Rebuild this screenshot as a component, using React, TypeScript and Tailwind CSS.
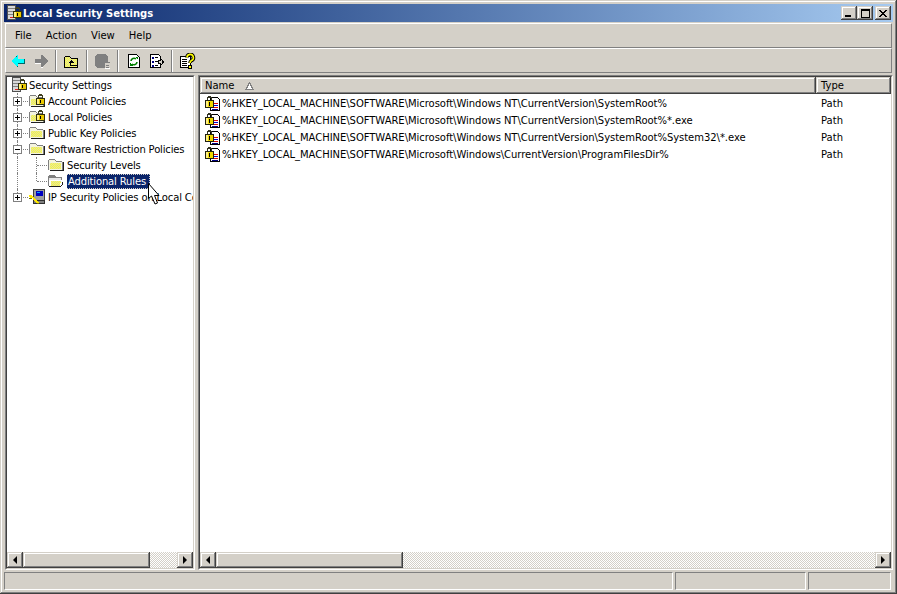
import type { ReactNode } from 'react';

const RAISED = 'shadow-[inset_-1px_-1px_#404040,inset_1px_1px_#d4d0c8,inset_-2px_-2px_#808080,inset_2px_2px_#ffffff]';
const SUNKEN = 'border border-t-[#808080] border-l-[#808080] border-r-white border-b-white';

const TREE = [
  { label: 'Account Policies', depth: 0, box: '+', icon: 'lock' },
  { label: 'Local Policies', depth: 0, box: '+', icon: 'lock' },
  { label: 'Public Key Policies', depth: 0, box: '+', icon: 'folder' },
  { label: 'Software Restriction Policies', depth: 0, box: '-', icon: 'folder' },
  { label: 'Security Levels', depth: 1, icon: 'folder' },
  { label: 'Additional Rules', depth: 1, icon: 'open', selected: true },
  { label: 'IP Security Policies on Local Computer', depth: 0, box: '+', icon: 'ip', last: true },
];

const RULES = [
  '%HKEY_LOCAL_MACHINE\\SOFTWARE\\Microsoft\\Windows NT\\CurrentVersion\\SystemRoot%',
  '%HKEY_LOCAL_MACHINE\\SOFTWARE\\Microsoft\\Windows NT\\CurrentVersion\\SystemRoot%*.exe',
  '%HKEY_LOCAL_MACHINE\\SOFTWARE\\Microsoft\\Windows NT\\CurrentVersion\\SystemRoot%System32\\*.exe',
  '%HKEY_LOCAL_MACHINE\\SOFTWARE\\Microsoft\\Windows\\CurrentVersion\\ProgramFilesDir%',
];

function Px({ children, w = 16, h = 16 }: { children: ReactNode; w?: number; h?: number }) {
  return (
    <svg width={w} height={h} viewBox={`0 0 ${w} ${h}`} shapeRendering="crispEdges" className="shrink-0">
      <defs>
        <pattern id="dither" width="2" height="2" patternUnits="userSpaceOnUse">
          <rect width="2" height="2" fill="#ffff33" />
          <rect width="1" height="1" fill="#dcdcb0" />
          <rect x="1" y="1" width="1" height="1" fill="#dcdcb0" />
        </pattern>
      </defs>
      {children}
    </svg>
  );
}

function Padlock({ x = 0, y = 0 }: { x?: number; y?: number }) {
  return (
    <g transform={`translate(${x} ${y})`}>
      <path d="M2 5V1h1V0h3v1h1v4H6V2H3v3z" fill="#404020" />
      <rect x="0" y="4" width="9" height="7" fill="#303010" />
      <rect x="1" y="5" width="7" height="5" fill="#e8c800" />
      <rect x="1" y="5" width="2" height="5" fill="#fff080" />
      <rect x="4" y="6" width="1" height="3" fill="#000" />
    </g>
  );
}

function FolderBody() {
  return (
    <>
      <path d="M0 3h1V2h6v1h1v1h6v1h1v8H0z" fill="#808080" />
      <path d="M1 4V3h6v1h1v1h6v8H1z" fill="#f4f4e0" />
      <path d="M2 6h11v6H2z" fill="url(#dither)" />
      <path d="M15 5h1v9H2v-1h13z" fill="#202020" />
    </>
  );
}

function TreeIcon({ kind }: { kind: string }) {
  if (kind === 'folder')
    return (
      <Px>
        <FolderBody />
      </Px>
    );
  if (kind === 'open')
    return (
      <Px>
        <path d="M0 3h1V2h6v1h1v1h6v3h-1V5H1v8H0z" fill="#808080" />
        <path d="M1 5h12v2H1z" fill="#e8e8e8" />
        <path d="M1 7h14l-2 7H1z" fill="#fff" />
        <path d="M3 8h10l-1 5H3z" fill="url(#dither)" />
        <path d="M1 13h12v1H1zM13 12h1v1h-1zM14 9h1v3h-1z" fill="#202020" />
      </Px>
    );
  if (kind === 'lock')
    return (
      <Px>
        <FolderBody />
        <Padlock x={7} y={1} />
      </Px>
    );
  if (kind === 'ip')
    return (
      <Px>
        <rect x="4" y="0" width="12" height="13" fill="#404040" />
        <rect x="5" y="1" width="10" height="11" fill="#a0a0a0" />
        <rect x="7" y="2" width="7" height="5" fill="#0000c0" />
        <rect x="8" y="3" width="3" height="1" fill="#00a0ff" />
        <rect x="4" y="11" width="12" height="4" fill="#303030" />
        <rect x="5" y="12" width="10" height="2" fill="#808080" />
        <path d="M0 6h3v1h1v1h1v1h1v1h1v1h1v1h1v1h1v2H8v-1H7v-1H6v-1H5v-1H4V9H1V8H0z" fill="#ffe800" />
        <path d="M0 9h3v1H0zM8 14h2v1H8z" fill="#707000" />
      </Px>
    );
  return null;
}

function ServerLock() {
  return (
    <Px>
      <rect x="1" y="0" width="9" height="15" fill="#505050" />
      <rect x="2" y="1" width="7" height="13" fill="#d8d8d8" />
      <rect x="2" y="3" width="7" height="1" fill="#808080" />
      <rect x="2" y="6" width="7" height="1" fill="#808080" />
      <rect x="2" y="9" width="7" height="1" fill="#808080" />
      <rect x="4" y="12" width="3" height="1" fill="#e02020" />
      <Padlock x={7} y={2} />
    </Px>
  );
}

function RuleIcon() {
  return (
    <Px>
      <path d="M5 1.5h7.5l2 2v11H5z" fill="#fff" stroke="#000" />
      <path d="M9 7h4v1H9z" fill="#e00000" />
      <path d="M9 9h4v1H9z" fill="#0000d0" />
      <path d="M9 11h4v1H9z" fill="#e00000" />
      <path d="M7 13h6v1H7z" fill="#000080" />
      <path d="M2 5V1h1V0h3v1h1v4H6V2H3v3z" fill="#303020" />
      <rect x="0" y="4" width="9" height="8" fill="#202010" />
      <rect x="1" y="5" width="7" height="6" fill="#f0d800" />
      <rect x="1" y="5" width="2" height="6" fill="#fff080" />
      <rect x="4" y="6" width="1" height="4" fill="#000" />
    </Px>
  );
}

function Sep() {
  return <div className="mx-[3px] h-[22px] w-0.5 border-x border-l-[#808080] border-r-white" />;
}

function ToolButton({ children }: { children: ReactNode }) {
  return <div className="flex w-[23px] justify-center">{children}</div>;
}

function ToolIcons() {
  return (
    <div className="flex h-[23px] items-center">
      <ToolButton>
        <Px>
          <g transform="translate(1 0)">
            <path d="M0 8l6-6h1v4h6v4H7v4H6z" fill="#00ffff" />
            <path d="M7 10h6v1H7zM6 13h1v1H6zM13 6h1v5h-1zM5 3h1v1H5z" fill="#006868" />
          </g>
        </Px>
      </ToolButton>
      <ToolButton>
        <Px>
          <path d="M15 8L9 2H8v4H2v4h6v4h1z" fill="#808080" />
          <path d="M2 10h6v1H2zM8 14h2v1H8z" fill="#ffffff" />
        </Px>
      </ToolButton>
      <Sep />
      <ToolButton>
        <Px>
          <g transform="translate(-1 0)">
            <path d="M1 4h1V3h5v1h1v1h7v10H1z" fill="#000" />
            <path d="M2 5V4h5v1h1v1h6v8H2z" fill="url(#dither)" />
            <path d="M8 7l-3 3h2v3h7v-1H8v-2h3z" fill="#000" />
          </g>
        </Px>
      </ToolButton>
      <Sep />
      <ToolButton>
        <Px>
          <g transform="translate(-1 0)">
            <path d="M3 1h8l3 3v6h-3v5H3l-2-2V3z" fill="#808080" />
            <path d="M10 9h6v6h-6z" fill="#d4d0c8" />
            <path d="M10 9h6v1h-6zM10 9h1v6h-1zM12 12h3v1h-3zM12 14h3v1h-3z" fill="#808080" />
            <path d="M11 15h5v1h-5z" fill="#ffffff" />
          </g>
        </Px>
      </ToolButton>
      <Sep />
      <ToolButton>
        <Px>
          <path d="M2.5 1.5h8l3 3v10h-11z" fill="#fff" stroke="#000" />
          <path d="M5 8a3 3 0 0 1 5-2M11 9a3 3 0 0 1-5 2" fill="none" stroke="#008000" strokeWidth="1.6" shapeRendering="auto" />
          <path d="M9 4h3v3zM7 13H4v-3z" fill="#008000" />
        </Px>
      </ToolButton>
      <ToolButton>
        <Px>
          <path d="M1.500 1.500h8l2 2v11h-10z" fill="#fff" stroke="#000" />
          <path d="M3 4h2v2H3zM3 8h2v2H3zM3 12h2v2H3z" fill="#000080" />
          <path d="M6 4h3v1H6zM6 8h3v1H6zM6 12h3v1H6z" fill="#000" />
          <path d="M9.500 7.500h2v-2l3 3.500-3 3.500v-2h-2z" fill="#d4d0c8" stroke="#000" />
        </Px>
      </ToolButton>
      <Sep />
      <ToolButton>
        <Px>
          <g transform="translate(-1 0)">
            <path d="M1.500 3.500h10v11h-10z" fill="#fff" stroke="#000" />
            <path d="M3 6h5v1H3zM3 8h5v1H3zM3 10h5v1H3zM3 12h5v1H3z" fill="#000" />
            <path d="M8 4.500a3.200 3.200 0 1 1 4.500 3c-1 .5-1.500 1-1.500 2.500" fill="none" stroke="#000" strokeWidth="3.600" shapeRendering="auto" />
            <path d="M8 4.500a3.200 3.200 0 1 1 4.500 3c-1 .5-1.500 1-1.500 2.500" fill="none" stroke="#ffff00" strokeWidth="1.600" shapeRendering="auto" />
            <path d="M9 12h4v4H9z" fill="#000" />
            <path d="M10 13h2v2h-2z" fill="#ffff00" />
          </g>
        </Px>
      </ToolButton>
    </div>
  );
}

function Arrow({ dir }: { dir: 'left' | 'right' }) {
  return (
    <div className={`flex h-4 w-4 shrink-0 items-center justify-center bg-[#d4d0c8] ${RAISED}`}>
      <div
        className={
          dir === 'left'
            ? 'h-0 w-0 border-y-4 border-y-transparent border-r-4 border-r-black'
            : 'h-0 w-0 border-y-4 border-y-transparent border-l-4 border-l-black'
        }
      />
    </div>
  );
}

function HScroll({ thumb }: { thumb: string }) {
  return (
    <div className="flex h-4 shrink-0 bg-[repeating-conic-gradient(#ffffff_0_25%,#d4d0c8_0_50%)] bg-[length:2px_2px]">
      <Arrow dir="left" />
      <div className={`h-4 bg-[#d4d0c8] ${thumb} ${RAISED}`} />
      <div className="flex-1" />
      <Arrow dir="right" />
    </div>
  );
}

function Pane({ className, children }: { className: string; children: ReactNode }) {
  return (
    <div className={`flex flex-col ${SUNKEN} ${className}`}>
      <div className="flex min-h-0 flex-1 flex-col border border-t-[#404040] border-l-[#404040] border-r-[#d4d0c8] border-b-[#d4d0c8]">
        {children}
      </div>
    </div>
  );
}

function Band({ children }: { children: ReactNode }) {
  return <div className="h-[25px] border border-t-white border-l-white border-r-[#808080] border-b-[#808080]">{children}</div>;
}

export default function App() {
  return (
    <div className={`h-[594px] w-[897px] overflow-hidden bg-[#d4d0c8] font-['DejaVu_Sans',sans-serif] text-[10px] leading-[13px] text-black ${RAISED}`}>
      <div className="flex h-full flex-col p-1">
        <div className="flex h-[18px] shrink-0 items-center bg-gradient-to-r from-[#0a246a] to-[#a6caf0] px-0.5">
          <ServerLock />
          <span className="ml-px flex-1 text-[10px] font-bold text-white">Local Security Settings</span>
          <button className={`flex h-[14px] w-4 items-end justify-start bg-[#d4d0c8] pb-[3px] pl-[4px] ${RAISED}`}>
            <span className="h-0.5 w-[6px] bg-black" />
          </button>
          <button className={`flex h-[14px] w-4 items-center justify-center bg-[#d4d0c8] ${RAISED}`}>
            <span className="h-[9px] w-[9px] border border-t-2 border-black" />
          </button>
          <button className={`ml-0.5 flex h-[14px] w-4 items-center justify-center bg-[#d4d0c8] ${RAISED}`}>
            <svg width="8" height="7" viewBox="0 0 8 7" shapeRendering="crispEdges">
              <path d="M0 0h2v1h1v1h2V1h1V0h2v1H7v1H6v1H5v1h1v1h1v1h1v1H6V6H5V5H3v1H2v1H0V6h1V5h1V4h1V3H2V2H1V1H0z" fill="#000" />
            </svg>
          </button>
        </div>

        <div className="mt-px shrink-0 px-px">
          <Band>
            <div className="flex h-full items-center pl-[2px]">
              {['File', 'Action', 'View', 'Help'].map((m) => (
                <span key={m} className="px-[7px] pb-px">
                  {m}
                </span>
              ))}
            </div>
          </Band>
          <Band>
            <ToolIcons />
          </Band>
        </div>

        <div className="mt-[2px] flex min-h-0 flex-1 pl-px">
          <Pane className="w-[190px] shrink-0">
            <div className="relative min-h-0 flex-1 overflow-hidden bg-white tracking-[-0.15px]">
              <div className="flex h-4 items-center pl-[4px]">
                <ServerLock />
                <span className="ml-[2px] whitespace-nowrap">Security Settings</span>
              </div>
              {TREE.map((n) => (
                <div key={n.label} className="relative flex h-4 items-center pl-[6px]">
                  <span className={n.last ? 'absolute left-[10px] top-0 h-2 border-l border-dotted border-[#808080]' : 'absolute left-[10px] top-0 h-4 border-l border-dotted border-[#808080]'} />
                  {n.depth === 1 && <span className={n.selected ? 'absolute left-[29px] top-0 h-2 border-l border-dotted border-[#808080]' : 'absolute left-[29px] top-0 h-4 border-l border-dotted border-[#808080]'} />}
                  <span className={n.depth === 1 ? 'absolute left-[30px] top-2 w-[10px] border-t border-dotted border-[#808080]' : 'absolute left-[11px] top-2 w-[10px] border-t border-dotted border-[#808080]'} />
                  <div className="z-10 flex w-[9px] shrink-0 justify-center">
                    {n.box && (
                      <div className="relative flex h-[9px] w-[9px] items-center justify-center border border-[#808080] bg-white">
                        <span className="h-px w-[5px] bg-black" />
                        {n.box === '+' && <span className="absolute h-[5px] w-px bg-black" />}
                      </div>
                    )}
                  </div>
                  {n.depth === 1 && <div className="w-[19px] shrink-0" />}
                  <div className="z-10 ml-[7px] flex w-[19px] shrink-0 bg-white">
                    <TreeIcon kind={n.icon} />
                  </div>
                  <span
                    className={
                      n.selected
                        ? '-ml-px whitespace-nowrap border border-dotted border-[#d4d0c8] bg-[#0a246a] pl-px pr-[3px] text-white'
                        : 'whitespace-nowrap'
                    }
                  >
                    {n.label}
                  </span>
                </div>
              ))}
              <svg width="14" height="24" viewBox="0 0 14 24" className="absolute left-[141px] top-[106px]">
                <path d="M.5.5V15.500L3.500 13L7 21L9.500 20L6.500 12.500H11z" fill="#fff" stroke="#000" />
              </svg>
            </div>
            <HScroll thumb="w-[127px]" />
          </Pane>

          <div className="w-[3px] shrink-0" />

          <Pane className="min-w-0 flex-1">
            <div className="flex h-[17px] shrink-0">
              <div className={`relative flex w-[616px] items-center bg-[#d4d0c8] pl-[5px] ${RAISED}`}>
                Name
                <svg width="9" height="8" viewBox="0 0 9 8" className="ml-[10px]" shapeRendering="crispEdges">
                  <path d="M4 0h1v1h1v2h1v2h1v2h1v1H0V7h1V5h1V3h1V1h1z" fill="#808080" />
                  <path d="M4 2h1v2h1v2h1v1H2V6h1V4h1z" fill="#ffffff" />
                </svg>
              </div>
              <div className={`flex flex-1 items-center bg-[#d4d0c8] pl-[5px] ${RAISED}`}>Type</div>
            </div>
            <div className="min-h-0 flex-1 overflow-hidden bg-white pt-px">
              {RULES.map((r) => (
                <div key={r} className="flex h-[17px] items-center whitespace-nowrap pl-[5px]">
                  <RuleIcon />
                  <span className="ml-px w-[594px] tracking-[-0.04px]">{r}</span>
                  <span className="pl-[5px]">Path</span>
                </div>
              ))}
            </div>
            <HScroll thumb="w-[187px]" />
          </Pane>
        </div>

        <div className="mt-[2px] flex h-[18px] shrink-0 gap-0.5 pr-0.5">
          <div className={`flex-1 ${SUNKEN}`} />
          <div className={`w-[131px] ${SUNKEN}`} />
          <div className={`w-[83px] ${SUNKEN}`} />
        </div>
      </div>
    </div>
  );
}
